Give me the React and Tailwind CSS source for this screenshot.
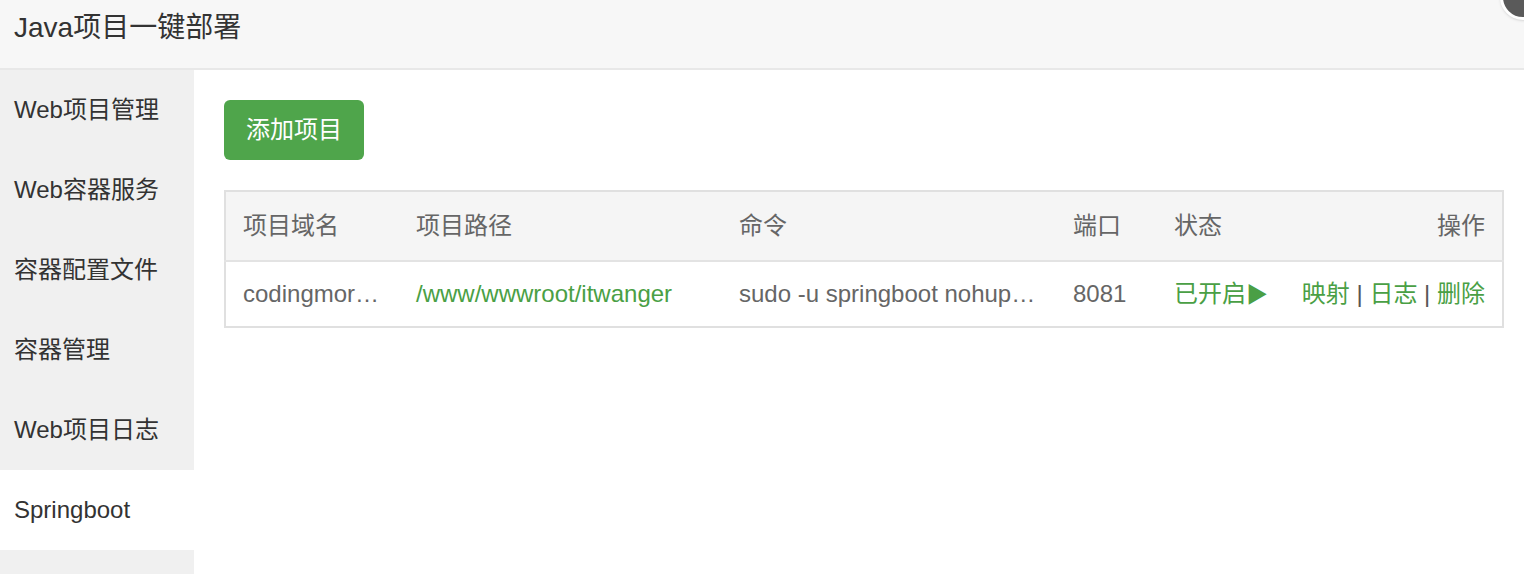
import React from 'react';

const menu = ['Web项目管理', 'Web容器服务', '容器配置文件', '容器管理', 'Web项目日志', 'Springboot'];

const font = { fontFamily: '"Liberation Sans", "Noto Sans CJK SC", sans-serif' };

export default function App() {
  const active = 'Springboot';

  return (
    <div className="relative w-[1524px] h-[574px] overflow-hidden bg-white text-[#333]" style={font}>
      {/* close button peeking in the corner */}
      <div className="absolute -right-[22px] -top-[26px] w-[46px] h-[46px] rounded-full bg-[#5a5a5a] border-[3px] border-white shadow" />

      <div className="h-[70px] bg-[#f7f7f7] border-b-2 border-[#e8e8e8] flex items-center pl-[14px] pb-[12px]">
        <span className="text-[28px] text-[#333]">Java项目一键部署</span>
      </div>

      <div className="flex h-[504px]">
        <div className="w-[194px] bg-[#f0f0f0] flex flex-col">
          {menu.map((m) => (
            <div
              key={m}
              className={`h-[80px] flex items-center pl-[14px] text-[24px] text-[#333] ${
                m === active ? 'bg-white' : ''
              }`}
            >
              {m}
            </div>
          ))}
        </div>

        <div className="flex-1 pl-[30px] pr-[20px] pt-[30px]">
          <button className="w-[140px] h-[60px] rounded-[6px] bg-[#4fa54b] text-white text-[24px]">
            添加项目
          </button>

          <table className="mt-[30px] w-[1280px] table-fixed border-2 border-[#e0e0e0] text-[24px] text-[#666]">
            <thead>
              <tr className="h-[70px] bg-[#f5f5f5] border-b-2 border-[#e3e3e3] text-left">
                <th className="font-normal pl-[17px] w-[191px]">项目域名</th>
                <th className="font-normal w-[323px]">项目路径</th>
                <th className="font-normal w-[334px]">命令</th>
                <th className="font-normal w-[101px]">端口</th>
                <th className="font-normal w-[120px]">状态</th>
                <th className="font-normal text-right pr-[17px]">操作</th>
              </tr>
            </thead>
            <tbody>
              <tr className="h-[66px]">
                <td className="pl-[17px]">
                  <div className="w-[137px] truncate">codingmore.top</div>
                </td>
                <td className="text-[#4a9f45]">/www/wwwroot/itwanger</td>
                <td>
                  <div className="w-[298px] truncate">sudo -u springboot nohup java -jar</div>
                </td>
                <td>8081</td>
                <td className="text-[#4a9f45] whitespace-nowrap">
                  已开启<span className="text-[22px]">▶</span>
                </td>
                <td className="text-right pr-[17px] text-[#4a9f45] whitespace-nowrap">
                  映射 <span className="text-[#555]">|</span> 日志 <span className="text-[#555]">|</span> 删除
                </td>
              </tr>
            </tbody>
          </table>
        </div>
      </div>
    </div>
  );
}
